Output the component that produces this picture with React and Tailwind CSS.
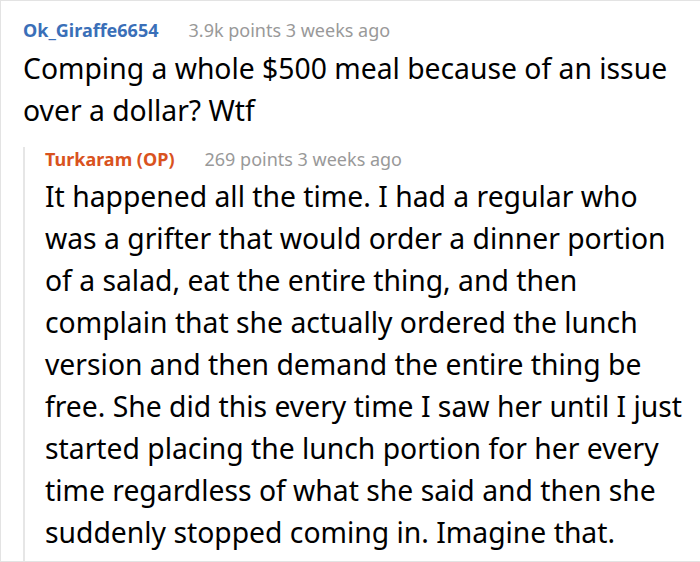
const comment = {
  user: 'Ok_Giraffe6654',
  meta: '3.9k points 3 weeks ago',
  body: 'Comping a whole $500 meal because of an issue over a dollar? Wtf',
};

const reply = {
  user: 'Turkaram (OP)',
  meta: '269 points 3 weeks ago',
  body: 'It happened all the time. I had a regular who was a grifter that would order a dinner portion of a salad, eat the entire thing, and then complain that she actually ordered the lunch version and then demand the entire thing be free. She did this every time I saw her until I just started placing the lunch portion for her every time regardless of what she said and then she suddenly stopped coming in. Imagine that.',
};

export default function App() {
  return (
    <div className="w-[700px] h-[562px] bg-white border-t border-l border-b border-[#e3e3e3] overflow-hidden font-['Noto_Sans',sans-serif]">
      <div className="pl-[22px] pt-[17px] pr-[12px]">
        <div className="flex items-baseline gap-[30px] text-[18px] leading-[24px]">
          <span className="font-bold text-[#3a6fb8]">{comment.user}</span>
          <span className="text-[#999]">{comment.meta}</span>
        </div>
        <p className="mt-[5px] text-[28.3px] leading-[42px] text-black">{comment.body}</p>

        <div className="mt-[16px] border-l-2 border-[#e6e6e6] pl-[20px] pb-[12px]">
          <div className="flex items-baseline gap-[30px] text-[18px] leading-[24px]">
            <span className="font-bold text-[#d9531e]">{reply.user}</span>
            <span className="text-[#999]">{reply.meta}</span>
          </div>
          <p className="mt-[4px] text-[28.3px] leading-[42px] text-black">{reply.body}</p>
        </div>
      </div>
    </div>
  );
}
